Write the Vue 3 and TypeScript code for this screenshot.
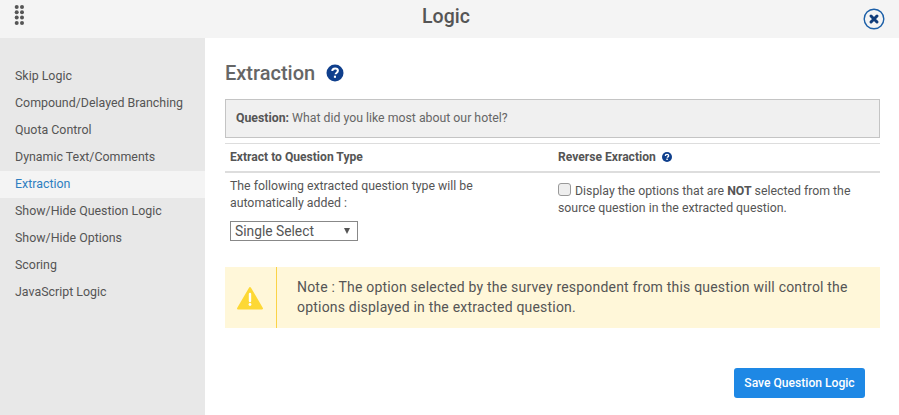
<script setup lang="ts">
const items: string[] = ['Skip Logic','Compound/Delayed Branching','Quota Control','Dynamic Text/Comments','Extraction','Show/Hide Question Logic','Show/Hide Options','Scoring','JavaScript Logic']
const dots: { x: number; y: number }[] = [7, 12.3, 17.6, 23].flatMap((y) => [{ x: 16.7, y }, { x: 22, y }])
</script>

<template>
  <div class="modal">
    <header class="head">
      <svg class="grip" width="30" height="30" viewBox="0 0 30 30"><g fill="#555"><circle v-for="(d, n) in dots" :key="n" :cx="d.x" :cy="d.y" r="2" /></g></svg>
      <h1>Logic</h1>
      <svg class="close" width="22" height="22" viewBox="0 0 22 22"><circle cx="11" cy="11" r="9.8" fill="none" stroke="#1b5fa8" stroke-width="1.4"/><path d="M8 8l6 6M14 8l-6 6" stroke="#0f3c7a" stroke-width="3" stroke-linecap="round"/></svg>
    </header>
    <div class="body">
      <nav class="side">
        <a v-for="i in items" :key="i" :class="{on:i==='Extraction'}">{{ i }}</a>
      </nav>
      <main class="main">
        <div class="title"><h2>Extraction</h2>
          <svg width="18" height="18" viewBox="0 0 18 18"><circle cx="9" cy="9" r="8.500" fill="#0f3f8c"/><path d="M6.300 7.100c0-1.700 1.200-2.600 2.800-2.600s2.800.9 2.800 2.300c0 1.900-2.300 1.900-2.300 3.500" fill="none" stroke="#fff" stroke-width="2"/><rect x="7.900" y="11.700" width="2.100" height="2.100" fill="#fff"/></svg>
        </div>
        <div class="question"><b>Question:</b> What did you like most about our hotel?</div>
        <div class="grid">
          <div class="th">Extract to Question Type</div>
          <div class="th">Reverse Exraction
            <svg width="10" height="10" viewBox="0 0 18 18"><circle cx="9" cy="9" r="9" fill="#0f3f8c"/><path d="M6 7.100c0-1.800 1.300-2.800 3-2.800s3 1 3 2.400c0 2-2.400 2-2.400 3.600" fill="none" stroke="#fff" stroke-width="2.400"/><rect x="7.800" y="11.800" width="2.600" height="2.600" fill="#fff"/></svg>
          </div>
          <div class="cell">
            <p>The following extracted question type will be automatically added :</p>
            <div class="select"><span>Single Select</span><i></i></div>
          </div>
          <div class="cell right">
            <p class="line"><span class="check"></span>Display the options that are <b>NOT</b> selected from the</p>
            <p class="line">source question in the extracted question.</p>
          </div>
        </div>
        <div class="note">
          <div class="ico"><svg width="26" height="24" viewBox="0 0 26 24"><path d="M13 2L25 22.500H1Z" fill="#fdd835" stroke="#fdd835" stroke-width="2" stroke-linejoin="round"/><path d="M13 8v7" stroke="#fff" stroke-width="2.400" stroke-linecap="round"/><circle cx="13" cy="18.500" r="1.400" fill="#fff"/></svg></div>
          <div class="msg">Note : The option selected by the survey respondent from this question will control the options displayed in the extracted question.</div>
        </div>
        <div class="foot"><button type="button">Save Question Logic</button></div>
      </main>
    </div>
  </div>
</template>

<style>
html, body { margin: 0; background: #fff; }
</style>

<style scoped>
.modal { width: 899px; height: 415px; overflow: hidden; font-family: Roboto, "Noto Sans", sans-serif; color: #555; display: flex; flex-direction: column; }
.head { height: 38px; flex: none; background: #f4f4f4; display: flex; align-items: center; justify-content: center; position: relative; }
.head h1 { margin: 0; font-size: 19.500px; font-weight: 500; color: #555; line-height: 34px; padding: 0 7px 4px 0; }
.grip { position: absolute; left: 0; top: 0; }
.close { position: absolute; left: 863px; top: 8px; }
.body { flex: 1; display: flex; min-height: 0; }
.side { width: 205px; flex: none; background: #e8e8e8; padding-top: 25px; box-sizing: border-box; }
.side a { display: block; height: 27px; line-height: 25px; padding-left: 15px; font-size: 12.400px; color: #555; }
.side a.on { background: #f4f4f4; color: #2f7fc1; }
.main { flex: 1; padding: 0 19px 0 20px; min-width: 0; }
.title { display: flex; align-items: center; gap: 11px; height: 61px; padding-top: 8px; box-sizing: border-box; }
.title h2 { margin: 0; font-size: 20px; font-weight: 500; color: #666; }
.question { height: 39px; box-sizing: border-box; border: 1px solid #c4c4c4; background: #f0f0f0; line-height: 37px; padding-left: 10px; font-size: 12.300px; color: #666; }
.question b { color: #555; font-weight: 700; }
.grid { display: grid; grid-template-columns: 328px 1fr; margin-top: 5px; border-top: 1px solid #ddd; }
.th { height: 27px; line-height: 26px; border-bottom: 2px solid #ddd; padding-left: 5px; font-size: 12.100px; font-weight: 700; color: #555; }
.th svg { margin-left: 3px; vertical-align: -1px; }
.cell { padding: 5px 5px 0; font-size: 12.300px; line-height: 17px; color: #555; height: 94px; box-sizing: border-box; }
.cell p { margin: 0; width: 300px; }
.cell.right { padding-top: 10px; }
.line { white-space: nowrap; }
.check { display: inline-block; width: 11px; height: 11px; border: 1px solid #999; border-radius: 3px; background: #eee; margin-right: 4px; vertical-align: -1px; }
.select { width: 128px; height: 20px; box-sizing: border-box; border: 1px solid #888; margin-top: 9px; display: flex; align-items: center; justify-content: space-between; padding: 0 7px 0 4px; font-size: 13.800px; color: #555; }
.select i { width: 0; height: 0; border-left: 3px solid transparent; border-right: 3px solid transparent; border-top: 6px solid #555; }
.note { height: 61px; background: #fff7d9; display: flex; }
.ico { width: 52px; flex: none; border-right: 1px solid #fbd347; display: flex; align-items: center; justify-content: center; padding-right: 1px; box-sizing: border-box; }
.msg { padding: 10px 20px 0; font-size: 14px; line-height: 20px; color: #555; letter-spacing: .2px; }
.foot { display: flex; justify-content: flex-end; padding: 40px 15px 0 0; }
button { width: 131px; height: 30px; border: 0; border-radius: 3px; background: #1e88e5; color: #fff; font: 500 12.100px Roboto, sans-serif; padding: 0; }
</style>
